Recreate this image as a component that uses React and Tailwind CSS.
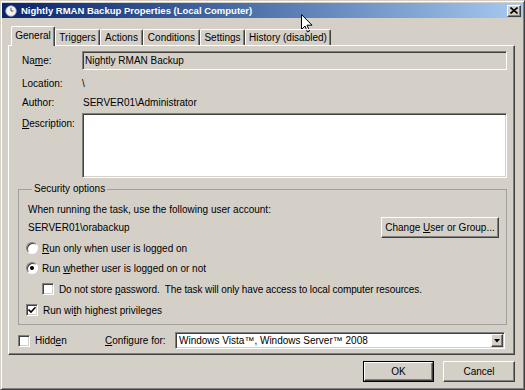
const raised =
  "border border-t-white border-l-white border-b-[#404040] border-r-[#404040] shadow-[inset_-1px_-1px_0_#808080]";
const sunken =
  "border border-t-[#808080] border-l-[#808080] border-b-white border-r-white shadow-[inset_1px_1px_0_#404040,inset_-1px_-1px_0_#d4d0c8]";

function U({ children }) {
  return <span className="underline underline-offset-[1px]">{children}</span>;
}

function Radio({ checked }) {
  return (
    <span className="w-[12px] h-[12px] rounded-full bg-white border border-t-[#808080] border-l-[#808080] border-b-white border-r-white shadow-[inset_1px_1px_0_#404040] flex items-center justify-center shrink-0">
      {checked && <span className="w-[4px] h-[4px] rounded-full bg-black" />}
    </span>
  );
}

function Check({ checked }) {
  return (
    <span className={`w-[12px] h-[12px] bg-white flex items-center justify-center shrink-0 ${sunken}`}>
      {checked && (
        <svg width="8" height="8" viewBox="0 0 8 8">
          <path d="M0.5 3.5 L3 6 L7.5 1.2" fill="none" stroke="#000" strokeWidth="1.6" />
        </svg>
      )}
    </span>
  );
}

const tabs = [
  { label: "General", w: "w-[44px]", active: true },
  { label: "Triggers", w: "w-[45px]" },
  { label: "Actions", w: "w-[43px]" },
  { label: "Conditions", w: "w-[57px]" },
  { label: "Settings", w: "w-[45px]" },
  { label: "History (disabled)", w: "w-[86px]" },
];

export default function App() {
  return (
    <div className="relative w-[525px] h-[390px] bg-[#d4d0c8] border border-t-[#d4d0c8] border-l-[#d4d0c8] border-b-[#404040] border-r-[#404040] shadow-[inset_1px_1px_0_#fff,inset_-1px_-1px_0_#808080] pt-[2px] px-[1px] font-['Liberation_Sans',Arial,sans-serif] text-[10px] text-black overflow-hidden select-none">
      {/* title bar */}
      <div className="h-[15px] flex items-center bg-gradient-to-r from-[#0a246a] to-[#a6caf0] pl-[3px] pr-[2px]">
        <svg width="12" height="12" viewBox="0 0 12 12" className="shrink-0">
          <circle cx="6" cy="6" r="5.3" fill="#f2f2f2" stroke="#9aa3b5" strokeWidth="0.8" />
          <path d="M6 2.8 V6 H8.4" fill="none" stroke="#555" strokeWidth="1" />
        </svg>
        <span className="ml-[4px] text-white font-bold text-[9.5px] leading-none">
          Nightly RMAN Backup Properties (Local Computer)
        </span>
        <div className={`ml-auto w-[14px] h-[12px] bg-[#d4d0c8] flex items-center justify-center ${raised}`}>
          <svg width="8" height="7" viewBox="0 0 8 7">
            <path d="M0.5 0.5 L7.5 6.5 M7.5 0.5 L0.5 6.5" stroke="#000" strokeWidth="1.6" />
          </svg>
        </div>
      </div>

      {/* tabs */}
      <div className="ml-[6px] mt-[8px] w-[507px]">
        <div className="flex items-end h-[19px] pl-[3px] relative z-10">
          {tabs.map((t) =>
            t.active ? (
              <div
                key={t.label}
                className={`${t.w} h-[20px] -mb-px bg-[#d4d0c8] border-t border-l border-t-white border-l-white border-r border-r-[#404040] shadow-[inset_-1px_0_0_#808080] rounded-t-[2px] flex items-center justify-center pb-[2px]`}
              >
                {t.label}
              </div>
            ) : (
              <div
                key={t.label}
                className={`${t.w} h-[16px] border-t border-l border-t-white border-l-white border-r border-r-[#404040] shadow-[inset_-1px_0_0_#808080] rounded-t-[2px] flex items-center justify-center`}
              >
                {t.label}
              </div>
            )
          )}
        </div>

        {/* panel */}
        <div className="h-[310px] border border-t-white border-l-white border-b-[#404040] border-r-[#404040] shadow-[inset_-1px_-1px_0_#808080] pt-[5px]">
          <div className="flex items-center h-[19px] pl-[13px]">
            <span className="w-[60px]">
              Na<U>m</U>e:
            </span>
            <div className={`w-[425px] h-[19px] flex items-center pl-[2px] ${sunken}`}>Nightly RMAN Backup</div>
          </div>
          <div className="flex items-center h-[16px] pl-[13px] mt-[5px]">
            <span className="w-[60px]">Location:</span>
            <span>\</span>
          </div>
          <div className="flex items-center h-[16px] pl-[13px] mt-[3px]">
            <span className="w-[61px]">Author:</span>
            <span>SERVER01\Administrator</span>
          </div>
          <div className="flex items-start pl-[13px] mt-[3px]">
            <span className="w-[60px] pt-[3px]">
              <U>D</U>escription:
            </span>
            <div className={`w-[425px] h-[65px] bg-white ${sunken}`} />
          </div>

          <fieldset className="ml-[9px] w-[489px] mt-[5px] border border-[#a0a0a0] pl-[7px] pr-[7px] pt-[7px] pb-[6px]">
            <legend className="ml-[6px] px-[2px] leading-[12px]">Security options</legend>
            <div className="pl-[2px] h-[14px] flex items-center">
              When running the task, use the following user account:
            </div>
            <div className="mt-[1px] flex items-center justify-between h-[21px]">
              <span className="pl-[2px]">SERVER01\orabackup</span>
              <div className={`w-[118px] h-[21px] flex items-center justify-center ${raised}`}>
                <span>
                  Change <U>U</U>ser or Group...
                </span>
              </div>
            </div>
            <div className="mt-[2px] h-[16px] flex items-center">
              <Radio />
              <span className="ml-[4px]">
                <U>R</U>un only when user is logged on
              </span>
            </div>
            <div className="mt-[4px] h-[16px] flex items-center">
              <Radio checked />
              <span className="ml-[4px]">
                Run <U>w</U>hether user is logged on or not
              </span>
            </div>
            <div className="mt-[5px] h-[16px] flex items-center pl-[16px]">
              <Check />
              <span className="ml-[5px] tracking-[-0.1px]">
                Do not store <U>p</U>assword.&nbsp; The task will only have access to local computer resources.
              </span>
            </div>
            <div className="mt-[5px] h-[16px] flex items-center">
              <Check checked />
              <span className="ml-[5px]">
                Run wi<U>t</U>h highest privileges
              </span>
            </div>
          </fieldset>

          <div className="mt-[7px] h-[17px] flex items-center pl-[9px]">
            <Check />
            <span className="ml-[5px] w-[70px]">
              Hidd<U>e</U>n
            </span>
            <span className="w-[70px]">
              <U>C</U>onfigure for:
            </span>
            <div className={`w-[330px] h-[17px] bg-white flex items-center pl-[3px] pr-[1px] ${sunken}`}>
              <span className="flex-1">Windows Vista™, Windows Server™ 2008</span>
              <div className={`w-[12px] h-[13px] bg-[#d4d0c8] flex items-center justify-center ${raised}`}>
                <svg width="6" height="4" viewBox="0 0 6 4">
                  <path d="M0 0 H6 L3 3.5 Z" fill="#000" />
                </svg>
              </div>
            </div>
          </div>
        </div>
      </div>

      {/* buttons */}
      <div className="flex justify-end gap-[9px] mt-[6px] w-[513px]">
        <div className="w-[71px] h-[21px] border border-black">
          <div className={`w-full h-full flex items-center justify-center ${raised}`}>OK</div>
        </div>
        <div className={`w-[72px] h-[21px] flex items-center justify-center ${raised}`}>Cancel</div>
      </div>

      {/* mouse cursor */}
      <svg width="12" height="19" viewBox="0 0 12 19" className="absolute left-[300px] top-[13px]">
        <path d="M0.5 0.5 V15.5 L4 12 L6.5 18 L8.5 17 L6 11.2 H11 Z" fill="#fff" stroke="#000" strokeWidth="1" />
      </svg>
    </div>
  );
}
